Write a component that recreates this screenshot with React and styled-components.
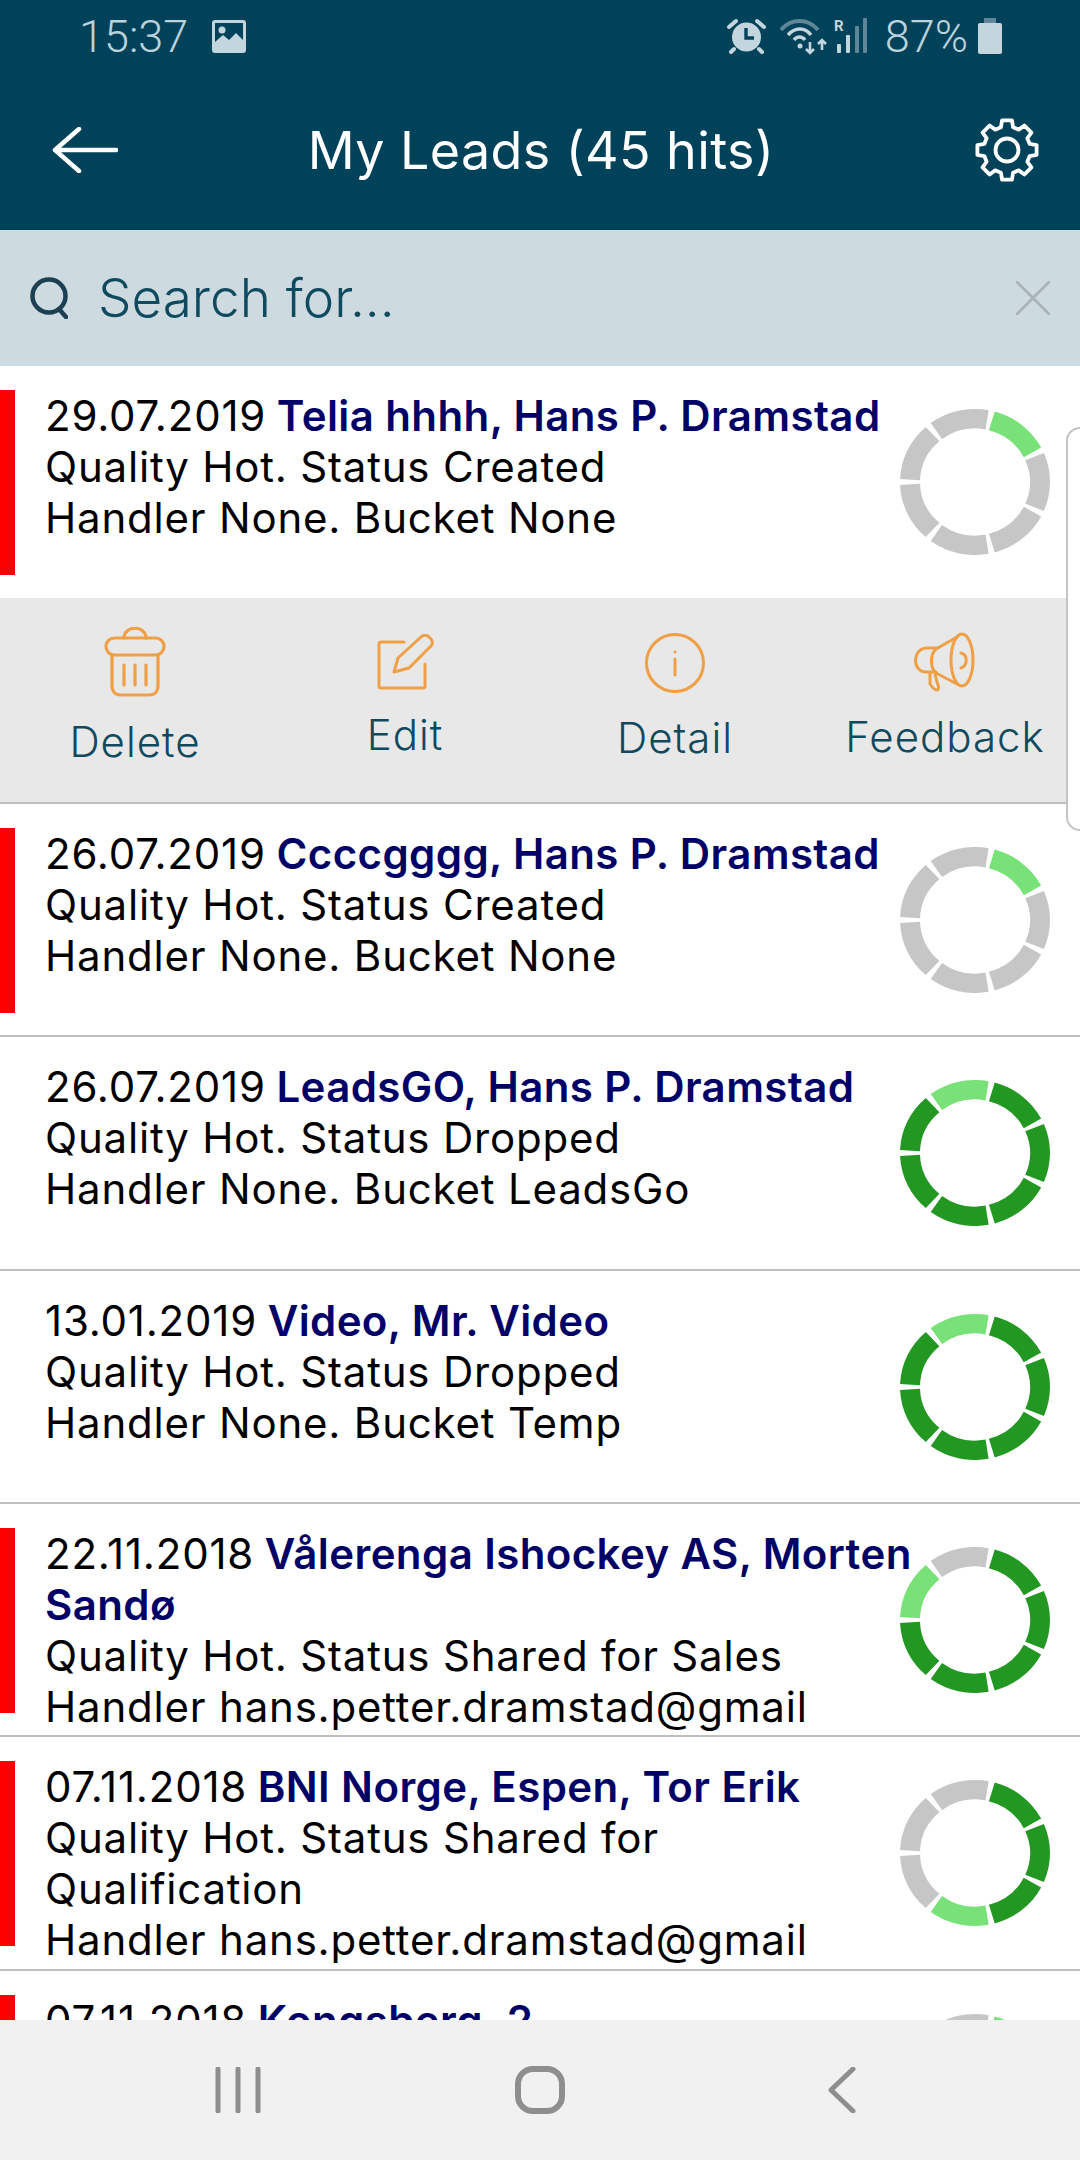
import React from 'react';
import styled, { createGlobalStyle } from 'styled-components';

const GlobalStyle = createGlobalStyle`
    html, body {
        margin: 0;
        padding: 0;
        background: #ffffff;
    }
    * {
        box-sizing: border-box;
    }
`;

const BODY_FONT = '"Inter", "Noto Sans", sans-serif';

const Page = styled.div`
    position: relative;
    width: 1080px;
    height: 2160px;
    display: flex;
    flex-direction: column;
    overflow: hidden;
    background: #ffffff;
    font-family: ${BODY_FONT};
`;

const TopBar = styled.header`
    height: 230px;
    flex-shrink: 0;
    background: #004259;
    display: flex;
    flex-direction: column;
`;

const StatusBar = styled.div`
    height: 72px;
    padding: 0 78px 0 79px;
    display: flex;
    align-items: center;
    justify-content: space-between;
    color: #bcd2dc;
    font-family: "Roboto", sans-serif;
    font-weight: 300;
    font-size: 45px;
`;

const StatusGroup = styled.div`
    display: flex;
    align-items: center;
    gap: ${props => props.$gap}px;
`;

const BatteryLevel = styled.span`
    margin: 0 -4px 0 4px;
`;

const TitleRow = styled.div`
    flex: 1;
    padding: 0 40px 2px 52px;
    display: flex;
    align-items: center;
    justify-content: space-between;
`;

const Title = styled.h1`
    margin: 0 10px 0 0;
    color: #ffffff;
    font-size: 52px;
    font-weight: 400;
    letter-spacing: 0.4px;
`;

const SearchBar = styled.div`
    height: 136px;
    flex-shrink: 0;
    padding: 0 30px;
    background: #cddae0;
    display: flex;
    align-items: center;
    gap: 30px;
`;

const SearchInput = styled.input`
    flex: 1;
    min-width: 0;
    border: 0;
    padding: 0;
    background: transparent;
    font-family: ${BODY_FONT};
    font-size: 53px;
    font-weight: 300;
    outline: none;
    &::placeholder {
        color: #0f4a5e;
        opacity: 1;
    }
`;

const List = styled.div`
    flex: 1;
    min-height: 0;
    overflow: hidden;
`;

const Row = styled.div`
    height: ${props => (props.$first ? '232px' : `${700 / 3}px`)};
    padding: 24px 30px 0 0;
    display: flex;
    align-items: flex-start;
    overflow: hidden;
    border-bottom: ${props => (props.$first ? '0' : '2px solid #bfbfbf')};
`;

const Flag = styled.div`
    width: 15px;
    height: 185px;
    flex-shrink: 0;
    margin-right: 30px;
    background: ${props => (props.$on ? '#ff0000' : 'transparent')};
`;

const RowText = styled.div`
    flex: 1;
    min-width: 0;
    margin-right: -20px;
    color: #000000;
    font-size: 42px;
    letter-spacing: 0.8px;
    line-height: 51px;
`;

const Name = styled.span`
    margin-left: -2px;
    color: #000066;
    font-weight: 600;
    letter-spacing: 0.4px;
`;

const RingBox = styled.svg`
    width: 150px;
    height: 146px;
    flex-shrink: 0;
    margin-top: 19px;
`;

const Actions = styled.div`
    height: 206px;
    display: grid;
    grid-template-columns: repeat(4, 270px);
    background: #e8e8e8;
    border-bottom: 2px solid #bfbfbf;
`;

const Action = styled.div`
    display: flex;
    flex-direction: column;
    align-items: center;
    padding-top: ${props => props.$top}px;
    gap: ${props => props.$gap}px;
    color: #0f4a5e;
    font-size: 42px;
    font-weight: 300;
    letter-spacing: 1px;
    line-height: 46px;
`;

const SidePanel = styled.div`
    position: absolute;
    top: 427px;
    left: 1066px;
    width: 30px;
    height: 404px;
    background: #ffffff;
    border: 2px solid #c4c4c4;
    border-radius: 14px;
`;

const NavBar = styled.nav`
    height: 140px;
    flex-shrink: 0;
    background: #f1f1f1;
    display: grid;
    grid-template-columns: repeat(3, 302px);
    justify-content: center;
    align-items: center;
`;

const NavSlot = styled.div`
    display: flex;
    justify-content: center;
`;

const Icon = styled.svg`
    display: block;
    flex-shrink: 0;
    fill: none;
    stroke: ${props => props.$color || '#ef9f45'};
    stroke-width: ${props => props.$weight || 3}px;
    stroke-linecap: round;
    stroke-linejoin: round;
`;

const STATUS_LIGHT = '#c3d5dd';
const STATUS_DIM = '#5f8799';

const polar = (r, deg) => {
    const a = ((deg - 90) * Math.PI) / 180;
    return [75 + r * Math.cos(a), 75 + r * Math.sin(a)];
};

const segmentPath = index => {
    const start = 12.86 + index * (360 / 7) + 2.4;
    const end = 12.86 + (index + 1) * (360 / 7) - 2.4;
    const [x1, y1] = polar(75, start);
    const [x2, y2] = polar(75, end);
    const [x3, y3] = polar(55, end + 0.6);
    const [x4, y4] = polar(55, start - 0.6);
    return `M${x1} ${y1}A75 75 0 0 1 ${x2} ${y2}L${x3} ${y3}A55 55 0 0 0 ${x4} ${y4}Z`;
};

const segmentColor = (index, step) => {
    if (index + 1 < step) return '#229722';
    if (index + 1 === step) return '#78e178';
    return '#c6c6c6';
};

const Ring = ({ step }) => (
    <RingBox viewBox="0 0 150 150" preserveAspectRatio="none">
        {[0, 1, 2, 3, 4, 5, 6].map(i => (
            <path key={i} d={segmentPath(i)} fill={segmentColor(i, step)} />
        ))}
    </RingBox>
);

const gearPath = () => {
    const points = [];
    for (let i = 0; i < 8; i++) {
        const c = i * 45;
        [[23.5, c - 15], [30, c - 9.5], [30, c + 9.5], [23.5, c + 15]].forEach(([r, deg]) => {
            const a = ((deg - 90) * Math.PI) / 180;
            points.push(`${33 + r * Math.cos(a)} ${33 + r * Math.sin(a)}`);
        });
    }
    return `M${points.join('L')}Z`;
};

const ImageIcon = () => (
    <svg width="34" height="33" viewBox="0 0 34 33">
        <rect width="34" height="33" rx="3" fill={STATUS_LIGHT} />
        <rect x="3" y="3" width="28" height="24" fill="#004259" />
        <circle cx="10" cy="10" r="3.5" fill={STATUS_LIGHT} />
        <path d="M3 22L11 15L17 20L24 13L31 20V30H3Z" fill={STATUS_LIGHT} />
    </svg>
);

const AlarmIcon = () => (
    <svg width="39" height="36" viewBox="0 0 39 36">
        <circle cx="19.5" cy="19" r="14.5" fill={STATUS_LIGHT} />
        <path d="M19 10V20H27" fill="none" stroke="#004259" strokeWidth="3.4" />
        <path d="M2 9L9 3M37 9L30 3M7 31L4 34M32 31L35 34" stroke={STATUS_LIGHT} strokeWidth="4" strokeLinecap="round" />
    </svg>
);

const SignalIcon = () => (
    <svg width="87" height="38" viewBox="0 0 87 38">
        <path d="M1 13C11 1 28 1 38 13" fill="none" stroke={STATUS_DIM} strokeWidth="4" />
        <path d="M8 18C15 10 25 10 31 18" fill="none" stroke={STATUS_LIGHT} strokeWidth="3.5" />
        <path d="M14 23C17 19 22 19 25 23" fill="none" stroke={STATUS_LIGHT} strokeWidth="3.5" />
        <circle cx="20" cy="29" r="2.5" fill={STATUS_LIGHT} />
        <path d="M30 25V36M26 32L30 36L34 32M42 33V23M38 27L42 23L46 27" fill="none" stroke={STATUS_LIGHT} strokeWidth="2.6" />
        <text x="54" y="14" fill={STATUS_LIGHT} fontFamily="Roboto, sans-serif" fontWeight="700" fontSize="15">R</text>
        <rect x="57" y="27" width="4" height="9" rx="1" fill={STATUS_LIGHT} />
        <rect x="66" y="18" width="4" height="18" rx="1" fill={STATUS_LIGHT} />
        <rect x="75" y="9" width="4" height="27" rx="1" fill={STATUS_DIM} />
        <rect x="83" y="1" width="4" height="35" rx="1" fill={STATUS_DIM} />
    </svg>
);

const BatteryIcon = () => (
    <svg width="24" height="36" viewBox="0 0 24 36">
        <path d="M6 0H18V6H6Z" fill={STATUS_DIM} />
        <rect y="5" width="24" height="31" rx="2" fill={STATUS_LIGHT} />
    </svg>
);

const TrashIcon = () => (
    <Icon width="62" height="70" viewBox="0 0 62 70" $weight={3.2}>
        <path d="M20 11C20 -2 42 -2 42 11" />
        <rect x="2" y="11" width="58" height="17" rx="8.5" />
        <path d="M8 28V59C8 65 12 68 17 68H45C50 68 54 65 54 59V28" />
        <path d="M20 38V58M31 38V58M42 38V58" />
    </Icon>
);

const EditIcon = () => (
    <Icon width="57" height="56" viewBox="0 0 57 56" $weight={3}>
        <path d="M27 8H4C2.5 8 2 9 2 10V52C2 53.500 3 54 4 54H46C47.500 54 48 53 48 52V30" />
        <path d="M17 38L21 24L44 3C47 0.5 50 1 52 3L54 5C56 8 56 10 54 12L32 34Z" />
    </Icon>
);

const InfoIcon = () => (
    <Icon width="60" height="60" viewBox="0 0 60 60" $weight={3}>
        <circle cx="30" cy="30" r="28.500" />
        <path d="M30 26V42M30 19V19.100" />
    </Icon>
);

const MegaphoneIcon = () => (
    <Icon width="62" height="60" viewBox="0 0 62 60" $weight={3}>
        <ellipse cx="48" cy="28" rx="11" ry="26" />
        <path d="M43 5L22 17C16 22 16 36 22 41L43 52" />
        <path d="M23 16H12C-2 17 -2 40 12 40H22" />
        <path d="M16 41V52C18 55 20 58 23 58C26 57 24 53 23 50L21 42" />
        <path d="M47 21C54 23 54 33 47 36" />
    </Icon>
);

const leads = [
    { date: '26.07.2019', name: 'Ccccgggg, Hans P. Dramstad', lines: ['Quality Hot. Status Created', 'Handler None. Bucket None'], flag: true, step: 1 },
    { date: '26.07.2019', name: 'LeadsGO, Hans P. Dramstad', lines: ['Quality Hot. Status Dropped', 'Handler None. Bucket LeadsGo'], flag: false, step: 7 },
    { date: '13.01.2019', name: 'Video, Mr. Video', lines: ['Quality Hot. Status Dropped', 'Handler None. Bucket Temp'], flag: false, step: 7 },
    { date: '22.11.2018', name: 'Vålerenga Ishockey AS, Morten Sandø', lines: ['Quality Hot. Status Shared for Sales', 'Handler hans.petter.dramstad@gmail'], flag: true, step: 6 },
    { date: '07.11.2018', name: 'BNI Norge, Espen, Tor Erik', lines: ['Quality Hot. Status Shared for Qualification', 'Handler hans.petter.dramstad@gmail'], flag: true, step: 4 },
    { date: '07.11.2018', name: 'Kongsberg, 2', lines: [], flag: true, step: 1 }
];

const LeadRow = ({ lead, first }) => (
    <Row $first={first}>
        <Flag $on={lead.flag} />
        <RowText>
            <div>
                {lead.date} <Name>{lead.name}</Name>
            </div>
            {lead.lines.map(line => <div key={line}>{line}</div>)}
        </RowText>
        <Ring step={lead.step} />
    </Row>
);

const App = () => (
    <Page>
        <GlobalStyle />
        <TopBar>
            <StatusBar>
                <StatusGroup $gap={24}>
                    <span>15:37</span>
                    <ImageIcon />
                </StatusGroup>
                <StatusGroup $gap={14}>
                    <AlarmIcon />
                    <SignalIcon />
                    <BatteryLevel>87%</BatteryLevel>
                    <BatteryIcon />
                </StatusGroup>
            </StatusBar>
            <TitleRow>
                <Icon width="66" height="46" viewBox="0 0 66 46" $color="#ffffff" $weight={4.500}>
                    <path d="M64 23H3M27 2L3 23L27 44" />
                </Icon>
                <Title>My Leads (45 hits)</Title>
                <Icon width="66" height="66" viewBox="0 0 66 66" $color="#ffffff" $weight={3.800}>
                    <path d={gearPath()} />
                    <circle cx="33" cy="33" r="11.500" />
                </Icon>
            </TitleRow>
        </TopBar>
        <SearchBar>
            <Icon width="38" height="42" viewBox="0 0 38 42" $color="#1c4052" $weight={4.500}>
                <circle cx="19" cy="19" r="16.500" />
                <path d="M29 32L36 40" />
            </Icon>
            <SearchInput placeholder="Search for..." readOnly />
            <Icon width="34" height="34" viewBox="0 0 34 34" $color="#a9b2b6" $weight={2.600}>
                <path d="M1 1L33 33M33 1L1 33" />
            </Icon>
        </SearchBar>
        <List>
            <LeadRow first lead={{ date: '29.07.2019', name: 'Telia hhhh, Hans P. Dramstad', lines: ['Quality Hot. Status Created', 'Handler None. Bucket None'], flag: true, step: 1 }} />
            <Actions>
                <Action $top={29} $gap={22}><TrashIcon />Delete</Action>
                <Action $top={36} $gap={22}><EditIcon />Edit</Action>
                <Action $top={35} $gap={22}><InfoIcon />Detail</Action>
                <Action $top={34} $gap={22}><MegaphoneIcon />Feedback</Action>
            </Actions>
            {leads.map(lead => <LeadRow key={lead.name} lead={lead} />)}
        </List>
        <SidePanel />
        <NavBar>
            <NavSlot>
                <Icon width="46" height="46" viewBox="0 0 46 46" $color="#8e8e8e" $weight={5}>
                    <path d="M3 2V44M23 2V44M43 2V44" />
                </Icon>
            </NavSlot>
            <NavSlot>
                <Icon width="50" height="48" viewBox="0 0 50 48" $color="#8e8e8e" $weight={6}>
                    <rect x="3" y="3" width="44" height="42" rx="15" />
                </Icon>
            </NavSlot>
            <NavSlot>
                <Icon width="28" height="46" viewBox="0 0 28 46" $color="#8e8e8e" $weight={5}>
                    <path d="M25 2L3 23L25 44" />
                </Icon>
            </NavSlot>
        </NavBar>
    </Page>
);

export default App;
